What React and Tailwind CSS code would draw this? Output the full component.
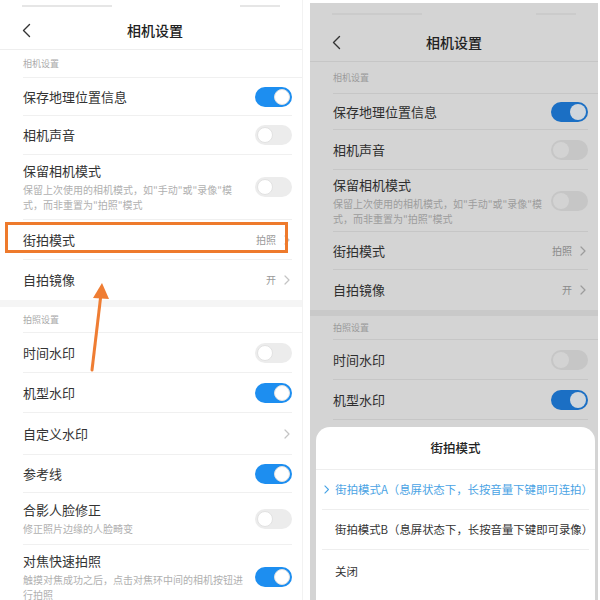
import React from "react";

const FONT = { fontFamily: '"Noto Sans CJK SC", "Noto Sans", sans-serif' };

function Toggle({ on, dim }) {
  if (dim) {
    return (
      <div className={`flex h-[20px] w-[37px] items-center rounded-full px-[2px] ${on ? "justify-end bg-[#1b6fc4]" : "justify-start bg-[#c6c6c6]"}`}>
        <div className={`h-[16px] w-[16px] rounded-full ${on ? "bg-[#d0d6dc]" : "bg-[#d3d3d3]"}`} />
      </div>
    );
  }
  return (
    <div className={`flex h-[20px] w-[37px] items-center rounded-full px-[2px] ${on ? "justify-end bg-[#1d8ef0]" : "justify-start bg-[#ececec]"}`}>
      <div className="h-[16px] w-[16px] rounded-full border border-[#e2e2e2] bg-white" />
    </div>
  );
}

function Chevron({ color = "#c4c4c4", size = 10 }) {
  return (
    <svg width={size * 0.6} height={size} viewBox="0 0 6 10" fill="none">
      <path d="M1 1l4 4-4 4" stroke={color} strokeWidth="1.2" strokeLinecap="round" strokeLinejoin="round" />
    </svg>
  );
}

function Row({ h, title, sub, subW = "w-[210px]", right, dim, last }) {
  return (
    <div className={`flex items-center pl-[23px] pr-[10px] ${h}`}>
      <div className={`flex h-full flex-1 items-center border-b ${last ? "border-transparent" : dim ? "border-[#c6c6c6]" : "border-[#f0f0f0]"}`}>
        <div className="flex flex-1 flex-col justify-center">
          <div className={`text-[13px] leading-[18px] ${dim ? "text-[#2e2e2e]" : "text-[#333]"}`}>{title}</div>
          {sub && (
            <div className={`mt-[2px] text-[10px] leading-[15px] ${subW} ${dim ? "text-[#9c9c9c]" : "text-[#b0b0b0]"}`}>{sub}</div>
          )}
        </div>
        <div className="flex items-center">{right}</div>
      </div>
    </div>
  );
}

function Value({ text, dim }) {
  return (
    <div className="flex items-center gap-[8px] pr-[2px]">
      {text && <span className={`text-[10px] ${dim ? "text-[#8a8a8a]" : "text-[#999]"}`}>{text}</span>}
      <Chevron color={dim ? "#9c9c9c" : "#c4c4c4"} />
    </div>
  );
}

function Section({ h, text, dim }) {
  return (
    <div className={`flex items-center pl-[23px] ${h}`}>
      <div className={`flex h-full flex-1 items-center border-b ${dim ? "border-[#c6c6c6]" : "border-[#f0f0f0]"}`}>
        <span className={`text-[9px] ${dim ? "text-[#9a9a9a]" : "text-[#aaa]"}`}>{text}</span>
      </div>
    </div>
  );
}

function Header({ dim, shift }) {
  return (
    <div className={`flex h-[38px] items-center border-b ${dim ? "border-[#c6c6c6]" : "border-[#eeeeee]"}`}>
      <div className="flex w-[52px] justify-center">
        <svg width="9" height="15" viewBox="0 0 9 15" fill="none">
          <path d="M7.5 1.5L1.5 7.5l6 6" stroke="#333" strokeWidth="1.4" strokeLinecap="round" strokeLinejoin="round" />
        </svg>
      </div>
      <div className={`flex-1 text-center text-[14px] font-medium text-[#222] ${shift ? "pr-[44px]" : "pr-[52px]"}`}>相机设置</div>
    </div>
  );
}

const KEEP_SUB = '保留上次使用的相机模式，如"手动"或"录像"模式，而非重置为"拍照"模式';

function LeftPhone() {
  return (
    <div className="relative h-[600px] w-[303px] overflow-hidden border-r border-[#f2f2f2] bg-white">
      <div className="flex h-[12px] items-center justify-between px-[22px]">
        <div className="h-[2px] w-[90px] bg-[#e6e6e6]" />
        <div className="h-[2px] w-[40px] bg-[#e6e6e6]" />
      </div>
      <Header shift />
      <Section h="h-[28px]" text="相机设置" />
      <Row h="h-[38px]" title="保存地理位置信息" right={<Toggle on />} />
      <Row h="h-[39px]" title="相机声音" right={<Toggle />} />
      <Row h="h-[65px]" title="保留相机模式" sub={KEEP_SUB} right={<Toggle />} />
      <Row h="h-[40px]" title="街拍模式" right={<Value text="拍照" />} />
      <Row h="h-[40px]" title="自拍镜像" right={<Value text="开" />} last />
      <div className="h-[7px] bg-[#f5f5f5]" />
      <Section h="h-[26px]" text="拍照设置" />
      <Row h="h-[40px]" title="时间水印" right={<Toggle />} />
      <Row h="h-[40px]" title="机型水印" right={<Toggle on />} />
      <Row h="h-[42px]" title="自定义水印" right={<Value />} />
      <Row h="h-[38px]" title="参考线" right={<Toggle on />} />
      <Row h="h-[52px]" title="合影人脸修正" sub="修正照片边缘的人脸畸变" right={<Toggle />} />
      <Row h="h-[64px]" title="对焦快速拍照" sub="触摸对焦成功之后，点击对焦环中间的相机按钮进行拍照" subW="w-[222px]" right={<Toggle on />} last />

      {/* highlight box */}
      <div className="absolute left-[5px] top-[222px] h-[31px] w-[283px] border-[3px] border-[#ee7a2c]" />
      {/* arrow */}
      <svg className="absolute left-[80px] top-[278px]" width="40" height="95" viewBox="0 0 40 95" fill="none">
        <path d="M12 92L21 16" stroke="#ef7d33" strokeWidth="3" strokeLinecap="round" />
        <path d="M13 20L22 5L29 21Z" fill="#ef7d33" />
      </svg>
    </div>
  );
}

function RightPhone() {
  return (
    <div className="relative mt-[3px] h-[597px] w-[288px] overflow-hidden bg-[#d4d4d4]">
      <div className="flex h-[21px] items-center justify-between px-[22px]">
        <div className="h-[2px] w-[90px] bg-[#cbcbcb]" />
        <div className="h-[2px] w-[40px] bg-[#cbcbcb]" />
      </div>
      <Header dim />
      <Section h="h-[32px]" text="相机设置" dim />
      <Row h="h-[36px]" title="保存地理位置信息" right={<Toggle on dim />} dim />
      <Row h="h-[40px]" title="相机声音" right={<Toggle dim />} dim />
      <Row h="h-[62px]" title="保留相机模式" sub={KEEP_SUB} right={<Toggle dim />} dim />
      <Row h="h-[38px]" title="街拍模式" right={<Value text="拍照" dim />} dim />
      <Row h="h-[40px]" title="自拍镜像" right={<Value text="开" dim />} dim last />
      <div className="h-[6px] bg-[#c9c9c9]" />
      <Section h="h-[24px]" text="拍照设置" dim />
      <Row h="h-[40px]" title="时间水印" right={<Toggle dim />} dim />
      <Row h="h-[40px]" title="机型水印" right={<Toggle on dim />} dim />

      {/* bottom sheet */}
      <div className="absolute left-[6px] right-[3px] top-[424px] h-[200px] rounded-t-[14px] bg-white">
        <div className="flex h-[43px] items-center justify-center border-b border-[#eeeeee] text-[12.5px] font-medium text-[#222]">街拍模式</div>
        <div className="mx-[6px] flex h-[40px] items-center gap-[6px] border-b border-[#eeeeee] pl-[2px]">
          <Chevron color="#46a3e6" size={9} />
          <span className="text-[11.4px] text-[#4aa3e4]">街拍模式A（息屏状态下，长按音量下键即可连拍）</span>
        </div>
        <div className="mx-[6px] flex h-[40px] items-center border-b border-[#eeeeee] pl-[13px] text-[11.4px] text-[#333]">街拍模式B（息屏状态下，长按音量下键即可录像）</div>
        <div className="mx-[6px] flex h-[44px] items-center pl-[13px] text-[11.4px] text-[#333]">关闭</div>
      </div>
    </div>
  );
}

export default function App() {
  return (
    <div className="flex h-[600px] w-[600px] overflow-hidden bg-white" style={FONT}>
      <LeftPhone />
      <div className="w-[7px]" />
      <RightPhone />
    </div>
  );
}
